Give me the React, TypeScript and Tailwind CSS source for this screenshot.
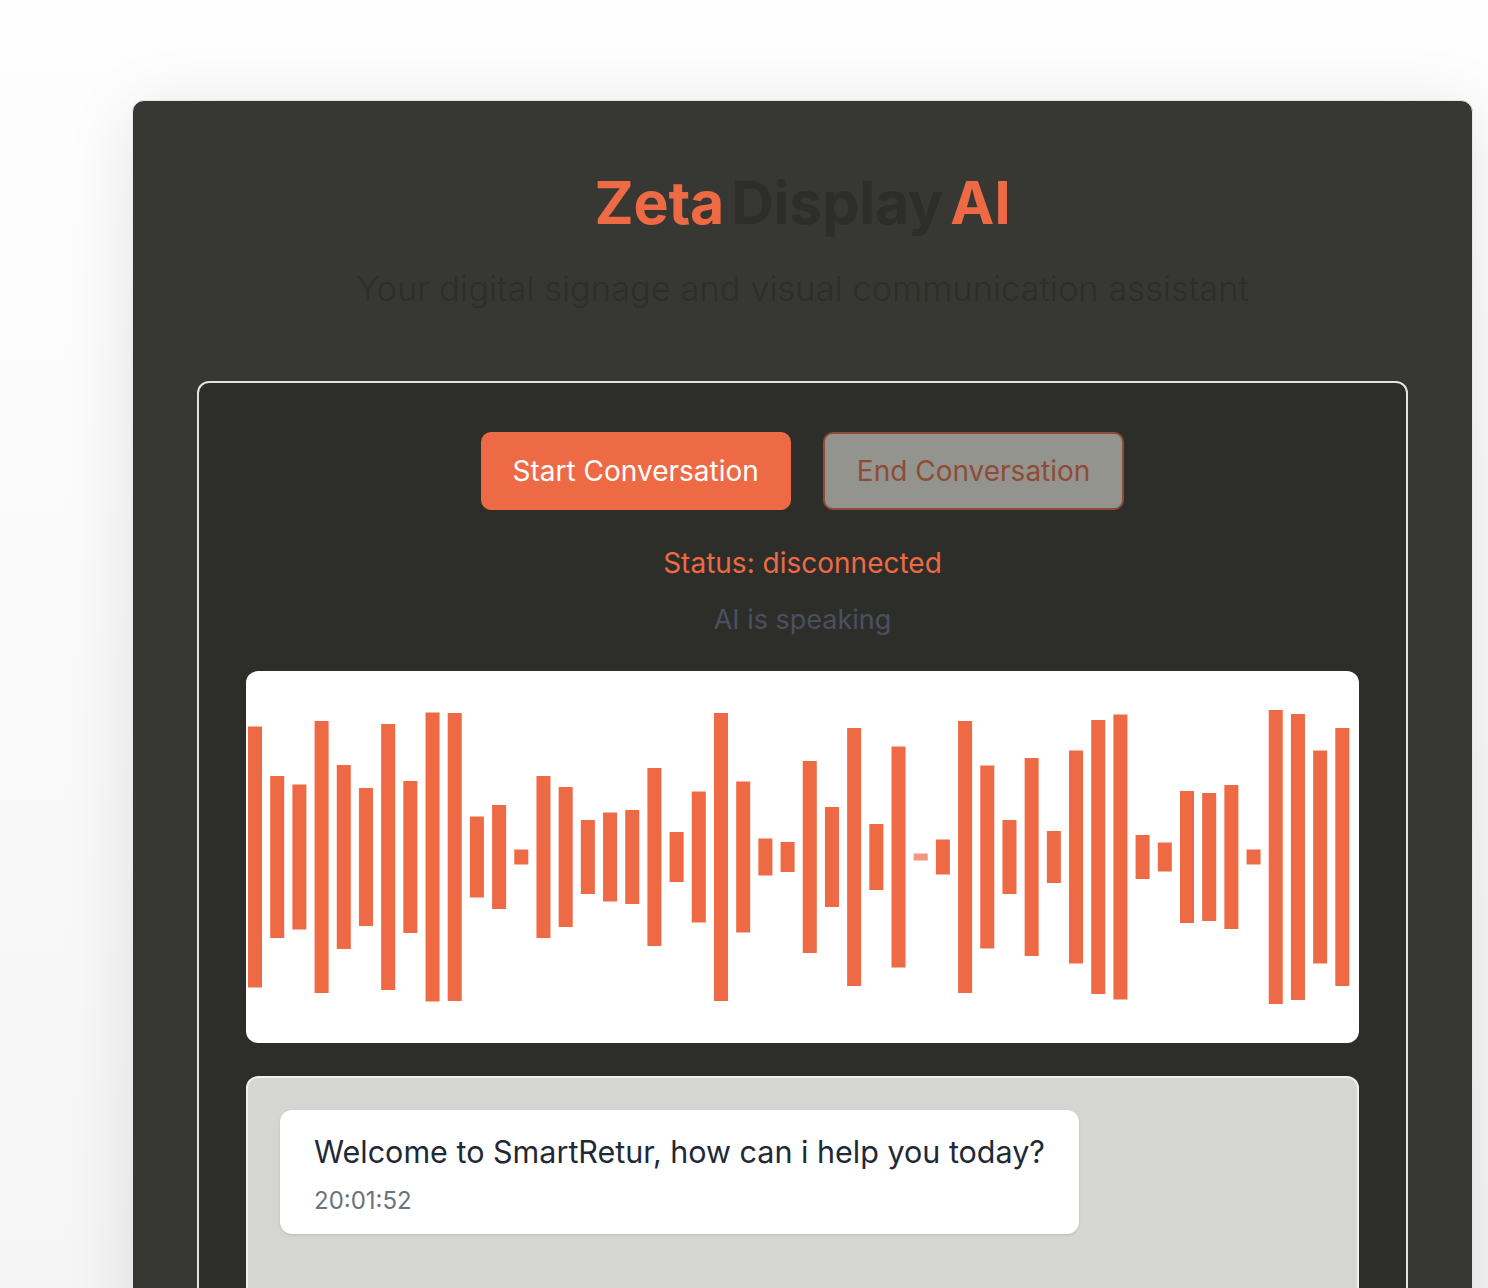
import React from 'react';

const bars = [
  261, 162, 145, 272, 184, 138, 266, 152, 289, 288, 81, 104, 15, 162, 140, 74, 89, 94, 178, 50, 131, 288, 151, 37, 30,
  192, 100, 258, 66, 221, 7, 35, 272, 183, 74, 198, 52, 213, 274, 285, 44, 29, 132, 128, 144, 15, 294, 286, 213, 258,
];

const Waveform: React.FC = () => (
  <svg viewBox="0 0 1111 372" className="block h-full w-full" preserveAspectRatio="none">
    {bars.map((h, i) => (
      <rect
        key={i}
        x={2 + i * 22.15}
        y={186 - h / 2}
        width={14}
        height={h}
        fill="#ee6a45"
        opacity={h < 10 ? 0.7 : 1}
      />
    ))}
  </svg>
);

const App: React.FC = () => {
  return (
    <div className="min-h-screen w-full bg-gradient-to-b from-[#fefefe] to-[#f3f3f3] pt-[100px] font-['Inter',sans-serif]">
      <div className="ml-[132px] w-[1341px] rounded-xl border border-[#e6e6e6] bg-[#373833] px-16 pt-[72px] pb-16 shadow-[0_10px_70px_rgba(0,0,0,0.1)]">
        {/* Header */}
        <h1 className="flex justify-center gap-[7px] text-[59px] font-bold leading-[60px] tracking-[-0.2px]">
          <span className="text-[#ee6a45]">Zeta</span>
          <span className="text-[#2d2e29]">Display</span>
          <span className="text-[#ee6a45]">AI</span>
        </h1>
        <p className="mt-[36px] text-center text-[34.5px] font-light leading-[40px] text-[#2d2e29]">
          Your digital signage and visual communication assistant
        </p>

        {/* Panel */}
        <div className="mt-[72px] rounded-xl border-2 border-[#e3e3df] bg-[#2d2e29] px-[47px] pt-[49px] pb-12">
          <div className="flex justify-center gap-8">
            <button className="flex h-[78px] items-center rounded-[10px] bg-[#ee6a45] px-8 text-[28px] text-white">
              Start Conversation
            </button>
            <button className="flex h-[78px] items-center rounded-[10px] border-2 border-[#ee6a45] bg-[#fafaf5] px-8 text-[28px] text-[#ee6a45] opacity-50">
              End Conversation
            </button>
          </div>

          <p className="mt-[35px] text-center text-[28px] leading-9 text-[#ee6a45]">Status: disconnected</p>
          <p className="mt-[23px] text-center text-[27px] leading-8 text-[#4b5060]">AI is speaking</p>

          <div className="mt-[35px] h-[372px] overflow-hidden rounded-xl bg-white">
            <Waveform />
          </div>

          {/* Transcript */}
          <div className="mt-[33px] min-h-[420px] rounded-xl border-2 border-[#f0f0ee] bg-[#d5d5d3] p-8">
            <div className="w-fit rounded-xl bg-white px-[34px] pt-[24px] pb-[17px] shadow-sm">
              <p className="text-[30.5px] leading-9 text-[#1f2937]">Welcome to SmartRetur, how can i help you today?</p>
              <p className="mt-[15px] text-[24px] leading-8 text-[#6b7280]">20:01:52</p>
            </div>
          </div>
        </div>
      </div>
    </div>
  );
};

export default App;
